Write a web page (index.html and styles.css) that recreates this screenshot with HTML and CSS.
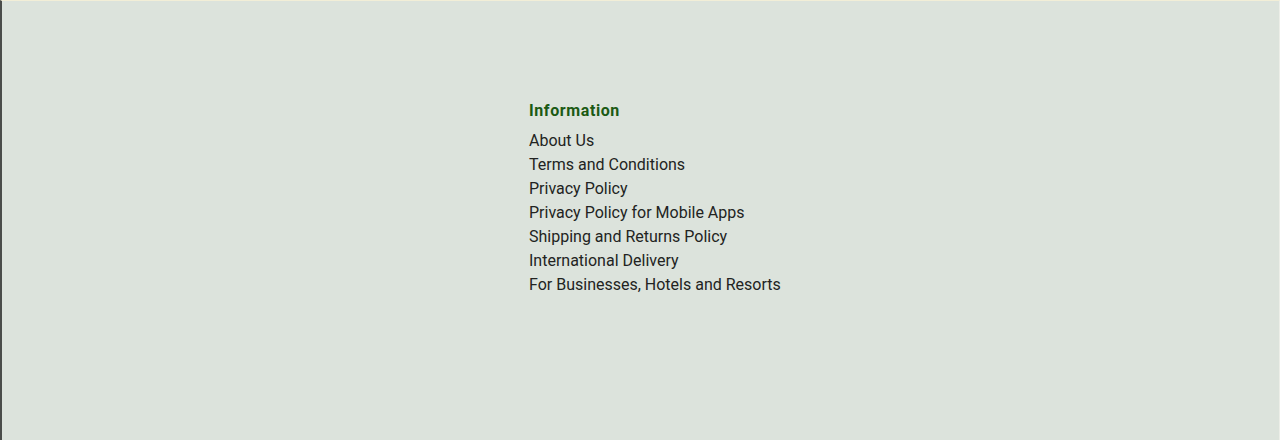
FILE: index.html
```html
<!DOCTYPE html>
<html lang="en">
<head>
<meta charset="utf-8">
<title>Footer</title>
<link rel="stylesheet" href="styles.css">
</head>
<body>
<div class="frame">
  <footer class="footer">
    <section class="col">
      <h3 class="col-title">Information</h3>
      <ul class="links">
        <li><a href="#">About Us</a></li>
        <li><a href="#">Terms and Conditions</a></li>
        <li><a href="#">Privacy Policy</a></li>
        <li><a href="#">Privacy Policy for Mobile Apps</a></li>
        <li><a href="#">Shipping and Returns Policy</a></li>
        <li><a href="#">International Delivery</a></li>
        <li><a href="#">For Businesses, Hotels and Resorts</a></li>
      </ul>
    </section>
  </footer>
</div>
</body>
</html>
```

FILE: styles.css
```css
html, body {
  margin: 0;
  padding: 0;
  height: 100%;
}
body {
  background: #dce3dc;
  font-family: Roboto, "Liberation Sans", sans-serif;
}
.frame {
  box-sizing: border-box;
  height: 440px;
  border-left: 2px solid #4a4d4a;
  border-top: 1px solid #f2eed7;
  border-right: 1px solid #eceee8;
  background: #dce3dc;
}
.footer {
  display: flex;
  padding-top: 98px;
  padding-left: 527px;
}
.col-title {
  margin: 0 0 6px 0;
  font-size: 16px;
  line-height: 24px;
  font-weight: 700;
  color: #1b5a14;
  letter-spacing: 0.6px;
}
.links {
  list-style: none;
  margin: 0;
  padding: 0;
}
.links li {
  font-size: 16px;
  line-height: 24px;
}
.links a {
  color: #222322;
  text-decoration: none;
}
```
